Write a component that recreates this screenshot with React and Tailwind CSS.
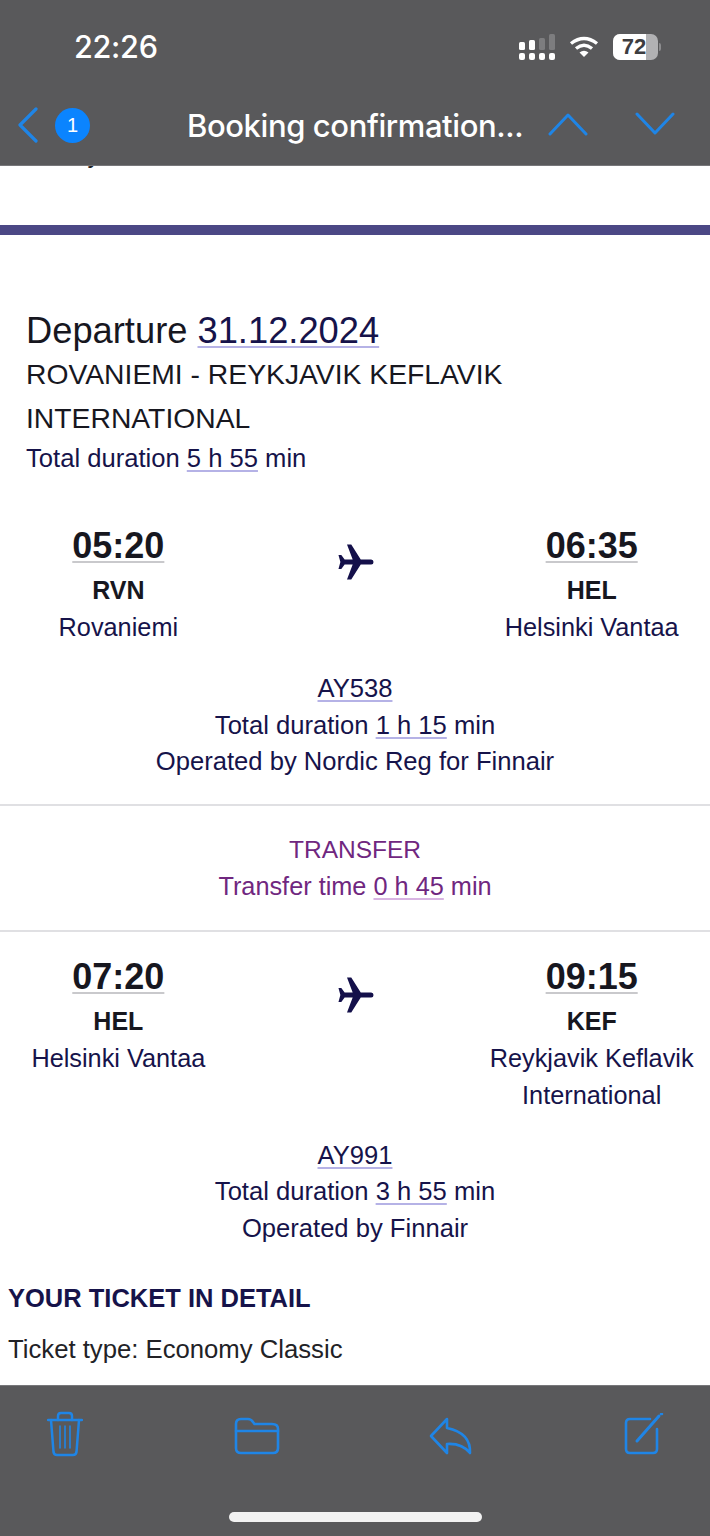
const link = "underline decoration-[#b5b2e6] decoration-2 underline-offset-[3px]";

function Plane() {
  return (
    <svg width="36" height="36" viewBox="0 0 38 36" preserveAspectRatio="none" className="mx-auto translate-x-[1px]">
      <path d="M0.500 11 L3.500 11 L7 15.500 L15.500 15.500 L9.500 0.500 L14 0.500 L24 15.500 L35 15.500 Q37.500 15.500 37.500 18 Q37.500 20.500 35 20.500 L24 20.500 L14 35.500 L9.500 35.500 L15.500 20.500 L7 20.500 L3.500 25 L0.500 25 L2.500 18 Z" fill="#14104a" />
    </svg>
  );
}

function Flight({ dep, from, fromCity, arr, to, toCity, toCity2, mt, planeTop }) {
  return (
    <div className={`grid grid-cols-3 text-center ${mt}`}>
      <div>
        <div className="text-[36px] leading-[44px] font-bold text-[#17171f]">
          <span className="underline decoration-[#c9c9cc] decoration-2 underline-offset-[3px]">{dep}</span>
        </div>
        <div className="text-[25px] leading-[44px] font-bold text-[#17171f]">{from}</div>
        <div className="text-[25.3px] leading-[30px] text-[#16134a]">{fromCity}</div>
      </div>
      <div className={planeTop}><Plane /></div>
      <div>
        <div className="text-[36px] leading-[44px] font-bold text-[#17171f]">
          <span className="underline decoration-[#c9c9cc] decoration-2 underline-offset-[3px]">{arr}</span>
        </div>
        <div className="text-[25px] leading-[44px] font-bold text-[#17171f]">{to}</div>
        <div className="text-[25.3px] leading-[30px] text-[#16134a] whitespace-nowrap">{toCity}</div>
        {toCity2 && <div className="text-[25.3px] leading-[44px] text-[#16134a]">{toCity2}</div>}
      </div>
    </div>
  );
}

function Info({ code, dur, op, mt }) {
  return (
    <div className={`text-center text-[25.6px] leading-[36.5px] text-[#16134a] ${mt}`}>
      <div><span className={link}>{code}</span></div>
      <div>Total duration <span className={link}>{dur}</span> min</div>
      <div>{op}</div>
    </div>
  );
}

export default function App() {
  return (
    <div className="w-[710px] h-[1536px] flex flex-col overflow-hidden bg-white font-['Liberation_Sans',Arial,sans-serif]">
      <header className="h-[166px] shrink-0 bg-[#59595b] border-b border-[#77777a] relative">
        <div className="flex items-center justify-between pl-[74px] pr-[49px] pt-[28px] h-[66px]">
          <span className="text-[30.6px] leading-[38px] font-['Inter',sans-serif] font-medium text-white tracking-[-0.3px]">22:26</span>
          <div className="flex items-center gap-[14px]">
            <svg width="36" height="26" viewBox="0 0 36 26">
              <g fill="#ffffff">
                <rect x="0" y="8" width="6" height="8" rx="1.5" />
                <rect x="10" y="6" width="6" height="10" rx="1.5" />
                <rect x="0" y="19" width="6" height="7" rx="2" />
                <rect x="10" y="19" width="6" height="7" rx="2" />
                <rect x="20" y="19" width="6" height="7" rx="2" />
                <rect x="30" y="19" width="6" height="7" rx="2" />
              </g>
              <rect x="20" y="4" width="6" height="12" rx="1.5" fill="#7d7d7f" />
              <rect x="30" y="0" width="6" height="16" rx="1.5" fill="#7d7d7f" />
            </svg>
            <svg width="30" height="24" viewBox="0 0 30 24" fill="none" stroke="#ffffff" strokeWidth="3.4">
              <path d="M2 8.500 Q15 -1.500 28 8.500" />
              <path d="M7 13.500 Q15 7 23 13.500" />
              <path d="M15 22 L10.500 17.500 Q15 14 19.500 17.500 Z" fill="#ffffff" stroke="none" />
            </svg>
            <div className="flex items-center gap-[1px]">
              <div className="relative w-[45px] h-[26px] rounded-[7px] overflow-hidden bg-[#b1b1b3]">
                <div className="absolute left-0 top-0 h-full w-[33px] bg-white" />
                <span className="absolute inset-0 pr-[3px] text-center text-[22px] leading-[26px] font-bold text-[#3d3d40]">72</span>
              </div>
              <div className="w-[2px] h-[8px] rounded-r bg-[#8c8c8e]" />
            </div>
          </div>
        </div>
        <div className="flex items-center h-[64px] mt-[27px] relative">
          <svg width="22" height="36" viewBox="0 0 22 36" fill="none" stroke="#1f85e6" strokeWidth="3.2" strokeLinecap="round" strokeLinejoin="round" className="ml-[17px]">
            <path d="M19 2 L3 18 L19 34" />
          </svg>
          <div className="ml-[16px] w-[35px] h-[35px] rounded-full bg-[#0b84fe] text-white text-center text-[20px] leading-[35px]">1</div>
          <span className="ml-[97px] pt-[1px] text-[31px] leading-[40px] font-['Inter',sans-serif] font-medium text-white tracking-[-0.4px] whitespace-nowrap">Booking confirmation...</span>
          <svg width="40" height="24" viewBox="0 0 40 24" fill="none" stroke="#1f85e6" strokeWidth="3" strokeLinecap="round" strokeLinejoin="round" className="absolute left-[548px] top-[19px]">
            <path d="M2 22 L20 3 L38 22" />
          </svg>
          <svg width="40" height="24" viewBox="0 0 40 24" fill="none" stroke="#1f85e6" strokeWidth="3" strokeLinecap="round" strokeLinejoin="round" className="absolute left-[635px] top-[19px]">
            <path d="M2 2 L20 21 L38 2" />
          </svg>
        </div>
      </header>

      <main className="flex-1 min-h-0 overflow-hidden">
        <div className="h-[8px] overflow-hidden">
          <div className="-mt-[27px] pl-[11px] text-[25px] leading-[30px] text-[#222]">Thank you for travel with Finnair</div>
        </div>
        <div className="h-[10px] mt-[51px] bg-[#4b4885]" />

        <div className="mt-[74px] pl-[26px] pr-[20px]">
          <div className="text-[36.3px] leading-[43px] text-[#17171f]">
            Departure <span className={`text-[#16134a] ${link}`}>31.12.2024</span>
          </div>
          <div className="text-[28.3px] leading-[44px] text-[#17171f] w-[520px]">ROVANIEMI - REYKJAVIK KEFLAVIK INTERNATIONAL</div>
          <div className="text-[25.6px] leading-[36px] text-[#16134a]">
            Total duration <span className={link}>5 h 55</span> min
          </div>
        </div>

        <Flight mt="mt-[48px]" planeTop="pt-[20px]" dep="05:20" from="RVN" fromCity="Rovaniemi" arr="06:35" to="HEL" toCity="Helsinki Vantaa" />
        <Info mt="mt-[28px]" code="AY538" dur="1 h 15" op="Operated by Nordic Reg for Finnair" />

        <div className="h-[2px] mt-[24px] bg-[#e0e0e3]" />
        <div className="mt-[25px] text-center text-[25.3px] leading-[37px] text-[#70277f]">
          <div className="text-[24.5px]">TRANSFER</div>
          <div>Transfer time <span className="underline decoration-[#d8b4e2] decoration-2 underline-offset-[3px]">0 h 45</span> min</div>
        </div>
        <div className="h-[2px] mt-[25px] bg-[#e0e0e3]" />

        <Flight mt="mt-[23px]" planeTop="pt-[22px]" dep="07:20" from="HEL" fromCity="Helsinki Vantaa" arr="09:15" to="KEF" toCity="Reykjavik Keflavik" toCity2="International" />
        <Info mt="mt-[20px]" code="AY991" dur="3 h 55" op="Operated by Finnair" />

        <div className="mt-[34px] pl-[8px] text-[25.5px] leading-[36px] font-bold text-[#16134a]">YOUR TICKET IN DETAIL</div>
        <div className="mt-[15px] pl-[8px] text-[25.7px] leading-[36px] text-[#222226]">Ticket type: Economy Classic</div>
      </main>

      <footer className="h-[151px] shrink-0 bg-[#59595b] border-t border-[#77777a] relative">
        <div className="flex h-[58px] mt-[24px] items-start relative">
          <svg width="36" height="46" viewBox="0 0 36 46" fill="none" stroke="#1f85e6" strokeWidth="2.5" strokeLinecap="round" strokeLinejoin="round" className="ml-[47px] mt-[1px]">
            <path d="M1 9 H35" />
            <path d="M11 9 V5 Q11 2 14 2 H22 Q25 2 25 5 V9" />
            <path d="M4 9 L6.500 41 Q7 44 10 44 H26 Q29 44 29.500 41 L32 9" />
            <path d="M13 15 V37 M18 15 V37 M23 15 V37" strokeWidth="1.600" />
          </svg>
          <svg width="46" height="38" viewBox="0 0 46 38" fill="none" stroke="#1f85e6" strokeWidth="2.600" strokeLinecap="round" strokeLinejoin="round" className="ml-[151px] mt-[7px]">
            <path d="M2 7 Q2 2 7 2 H14 Q17 2 19 5 L20.500 7 H38 Q44 7 44 12 V31 Q44 36 39 36 H7 Q2 36 2 31 Z" />
            <path d="M2 14 H44" />
          </svg>
          <svg width="44" height="38" viewBox="0 0 44 38" fill="none" stroke="#1f85e6" strokeWidth="2.600" strokeLinecap="round" strokeLinejoin="round" className="ml-[149px] mt-[7px]">
            <path d="M18 2 L2 19 L18 36 V27 Q33 26 41 36 Q42 16 18 11 Z" />
          </svg>
          <svg width="40" height="42" viewBox="0 0 40 42" fill="none" stroke="#1f85e6" strokeWidth="2.600" strokeLinecap="round" strokeLinejoin="round" className="ml-[151px] mt-[3px]">
            <path d="M26 6 H6 Q2 6 2 10 V36 Q2 40 6 40 H29 Q33 40 33 36 V16" />
            <path d="M13 28 L35 3" strokeWidth="3" />
            <path d="M37 1 L38 1" strokeWidth="2.500" />
          </svg>
        </div>
        <div className="absolute left-[229px] top-[126px] w-[253px] h-[10px] rounded-full bg-[#f2f2f2]" />
      </footer>
    </div>
  );
}
